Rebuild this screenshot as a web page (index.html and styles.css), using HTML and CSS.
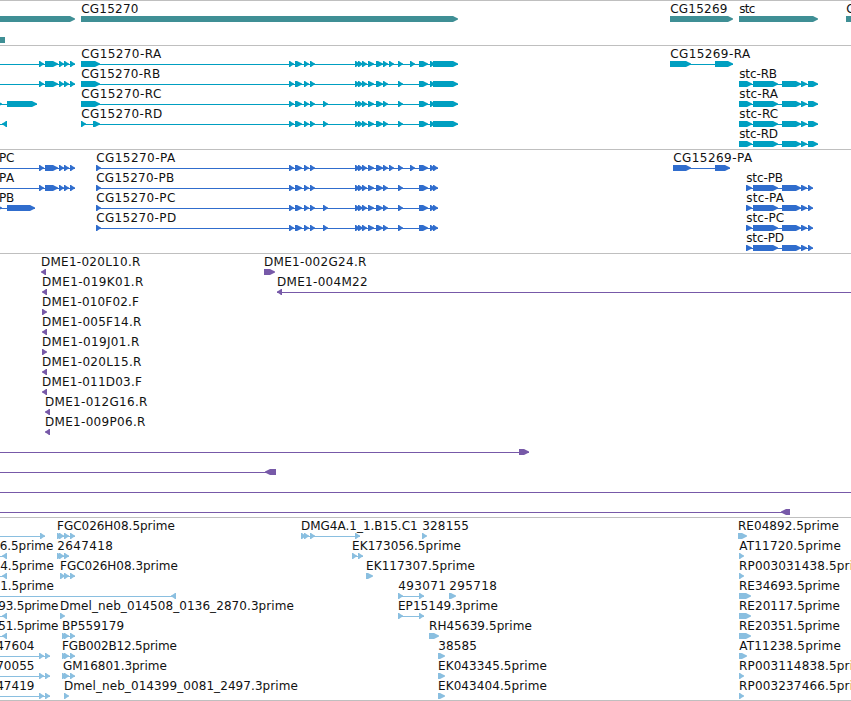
FILE: index.html
```html
<!DOCTYPE html>
<html lang="en">
<head>
<meta charset="utf-8">
<title>Genome tracks</title>
<link rel="stylesheet" href="styles.css">
</head>
<body>
<main class="browser" id="browser"></main>
<script src="tracks.js"></script>
</body>
</html>
```
FILE: styles.css
```css
body {
  margin: 0;
  background: #fff;
  overflow: hidden;
}

.browser {
  display: flex;
  flex-direction: column;
  width: 851px;
  height: 700px;
  border-bottom: 1px solid #bfbfbf;
}

.track {
  box-sizing: border-box;
  flex: none;
  border-top: 1px solid #bfbfbf;
}

.track svg {
  display: block;
  width: 851px;
  height: 100%;
}

.track text {
  font: 12px "DejaVu Sans", sans-serif;
  fill: #111;
}

.genes { height: 45px; color: #3f8f95; }
.transcripts { height: 104px; color: #009fc1; }
.proteins { height: 104px; color: #306dcd; }
.clones { height: 264px; color: #7759a8; }
.ests { height: 183px; color: #8abfe0; }
```
FILE: tracks.js
```js
const NS = 'http://www.w3.org/2000/svg';
const pen = document.createElement('canvas').getContext('2d');
pen.font = '12px "DejaVu Sans"';

// Feature: [row, label or '', label left, label right, exons, line start, line end]
// Exon: [start, end, direction]; direction -1 points left.
const head = [[39, 44], [45, 58], [59, 64], [64, 69], [70, 75]];
const early = [[289, 294], [295, 302], [304, 309], [310, 315]];
const extra = [[323, 328]];
const mid = [[355, 360], [358, 363], [362, 367], [368, 374], [376, 383], [383, 388]];
const late = [[398, 403]];
const isoA = [...early, ...mid, [389, 394], ...late, [410, 415], [419, 428]];
const isoB = [...early, ...mid, ...late, [419, 428]];
const isoC = [...early, ...extra, ...mid, ...late, [419, 428]];
const rEnd = [[430, 435], [433, 458]];
const pEnd = [[430, 435], [433, 438]];
const stcR = [[739, 752], [753, 778], [782, 801], [801, 807], [808, 818]];
const stcP = [[746, 752], [753, 778], [782, 801], [801, 807], [808, 813]];
const back = [[2, 7, -1]];
const three = [[62, 67], [64, 69], [70, 75]];
const ep = [[398, 403], [419, 424]];
const tail = [[39, 44], [45, 50]];

const tracks = {
  genes: [
    [0, '', 0, 0, [[-20, 75]]],
    [0, 'CG15270', 82, 138, [[81, 458]]],
    [0, 'CG15269', 671, 727, [[670, 733]]],
    [0, 'stc', 740, 755, [[739, 818]]],
    [0, 'C', 847, 854, [[846, 900]]],
    [1.05, '', 0, 0, [[-20, 5, 0]]]
  ],
  transcripts: [
    [0, '', 0, 0, head, 0, 75],
    [1, '', 0, 0, head, 0, 75],
    [2, '', 0, 0, [[-3, 2], [7, 37]], 0, 37],
    [3, '', 0, 0, back, 0, 7],
    [0, 'CG15270-RA', 82, 162, [[81, 100], ...isoA, ...rEnd], 81, 458],
    [1, 'CG15270-RB', 82, 160, [[81, 100], ...isoB, ...rEnd], 81, 458],
    [2, 'CG15270-RC', 82, 161, [[81, 100], ...isoC, ...rEnd], 81, 458],
    [3, 'CG15270-RD', 82, 162, [[81, 86], [93, 100], ...isoC, ...rEnd], 81, 458],
    [0, 'CG15269-RA', 671, 751, [[670, 691], [715, 733]], 670, 733],
    [1, 'stc-RB', 740, 777, stcR, 739, 818],
    [2, 'stc-RA', 740, 779, stcR, 739, 818],
    [3, 'stc-RC', 740, 778, stcR, 739, 818],
    [4, 'stc-RD', 740, 778, stcR, 739, 818]
  ],
  proteins: [
    [0, 'PC', 0, 14, head, 0, 75],
    [1, 'PA', 0, 15, head, 0, 75],
    [2, 'PB', 0, 14, [[-3, 2], [7, 35]], 0, 35],
    [0, 'CG15270-PA', 97, 176, [[96, 101], ...isoA, ...pEnd], 96, 438],
    [1, 'CG15270-PB', 97, 174, [[96, 101], ...isoB, ...pEnd], 96, 438],
    [2, 'CG15270-PC', 97, 175, [[96, 101], ...isoC, ...pEnd], 96, 438],
    [3, 'CG15270-PD', 97, 176, [[96, 101], ...isoC, ...pEnd], 96, 438],
    [0, 'CG15269-PA', 674, 753, [[673, 691], [715, 730]], 673, 730],
    [1, 'stc-PB', 747, 783, stcP, 746, 813],
    [2, 'stc-PA', 747, 785, stcP, 746, 813],
    [3, 'stc-PC', 747, 784, stcP, 746, 813],
    [4, 'stc-PD', 747, 784, stcP, 746, 813]
  ],
  clones: [
    [0, 'DME1-020L10.R', 42, 140, [[41, 46, -1]]],
    [1, 'DME1-019K01.R', 43, 143, [[42, 47, -1]]],
    [2, 'DME1-010F02.F', 43, 139, [[42, 47]]],
    [3, 'DME1-005F14.R', 43, 141, [[42, 47, -1]]],
    [4, 'DME1-019J01.R', 43, 139, [[42, 47]]],
    [5, 'DME1-020L15.R', 43, 141, [[42, 47, -1]]],
    [6, 'DME1-011D03.F', 43, 142, [[42, 47, -1]]],
    [7, 'DME1-012G16.R', 46, 147, [[45, 50, -1]]],
    [8, 'DME1-009P06.R', 46, 145, [[45, 50, -1]]],
    [0, 'DME1-002G24.R', 265, 366, [[264, 275]]],
    [1, 'DME1-004M22', 278, 367, [[277, 282, -1]], 277, 851],
    [9, '', 0, 0, [[519, 529]], 0, 529],
    [10, '', 0, 0, [[265, 276, -1]], 0, 276],
    [11, '', 0, 0, [], 0, 851],
    [12, '', 0, 0, [[781, 790, -1]], 0, 790]
  ],
  ests: [
    [0, '', 0, 0, [[40, 45]], 0, 45],
    [1, '6.5prime', 0.5, 53, back, 0, 7],
    [2, '4.5prime', 1, 53.5, back, 0, 7],
    [3, '1.5prime', 2, 53.5, [[171, 176, -1]], 0, 176],
    [4, '93.5prime', -1, 58, back, 0, 7],
    [5, '51.5prime', -1, 58, back, 0, 7],
    [6, '47604', -3, 34, tail, 0, 50],
    [7, '70055', -3, 34, tail, 0, 50],
    [8, '47419', -3, 34, tail, 0, 50],
    [0, 'FGC026H08.5prime', 58, 174.5, [[57, 62], [59, 64], [64, 69], [70, 75]], 57, 75],
    [1, '2647418', 58, 112.5, [[57, 62], [59, 64], [64, 69]], 57, 69],
    [2, 'FGC026H08.3prime', 61, 177.5, [[60, 65], [64, 69], [70, 75]], 60, 75],
    [4, 'Dmel_neb_014508_0136_2870.3prime', 61, 293.5, [[60, 65]]],
    [5, 'BP559179', 63, 123.5, three, 62, 75],
    [6, 'FGB002B12.5prime', 63, 176.5, three, 62, 75],
    [7, 'GM16801.3prime', 63, 166.5, three, 62, 75],
    [8, 'Dmel_neb_014399_0081_2497.3prime', 65, 297.5, [[64, 69]]],
    [0, 'DMG4A.1_1.B15.C1', 302, 417, [[301, 306], [304, 309], [310, 315], [355, 360]], 301, 360],
    [0, '328155', 423, 468.5, [[422, 427]]],
    [1, 'EK173056.5prime', 353, 460.5, [[352, 357], [358, 363]], 352, 363],
    [2, 'EK117307.5prime', 367, 474.5, [[366, 373]]],
    [3, '493071', 399, 445.5, ep, 398, 424],
    [3, '295718', 450, 496.5, [[449, 456]]],
    [4, 'EP15149.3prime', 399, 497.5, ep, 398, 424],
    [5, 'RH45639.5prime', 430, 531.5, [[429, 439]]],
    [6, '38585', 439, 476.5, [[438, 445]]],
    [7, 'EK043345.5prime', 439, 546.5, [[438, 445]]],
    [8, 'EK043404.5prime', 439, 546.5, [[438, 445]]],
    [0, 'RE04892.5prime', 739, 838.5, [[738, 747]]],
    [1, 'AT11720.5prime', 739.3, 840.5, [[739, 744]]],
    [2, 'RP003031438.5prime', 740, 872, [[739, 744]]],
    [3, 'RE34693.5prime', 740, 839.5, [[739, 751]]],
    [4, 'RE20117.5prime', 740, 839.5, [[739, 751]]],
    [5, 'RE20351.5prime', 740, 839.5, [[739, 751]]],
    [6, 'AT11238.5prime', 739.3, 840.5, [[739, 747]]],
    [7, 'RP003114838.5prime', 740, 872, [[739, 744]]],
    [8, 'RP003237466.5prime', 740, 872, [[739, 744]]]
  ]
};

function add(parent, name, attrs, text) {
  const el = document.createElementNS(NS, name);
  for (const key in attrs) el.setAttribute(key, attrs[key]);
  if (text) el.textContent = text;
  parent.appendChild(el);
}

function exonPath([a, b, dir = 1], y) {
  if (dir === 0) return `M${a} ${y}H${b}V${y + 6}H${a}Z`;
  const tip = dir > 0 ? b : a;
  const base = dir > 0 ? a : b;
  const neck = tip - dir * (b - a > 5 ? 5 : 4);
  const cheek = tip - dir * 2;
  const inset = 1.6;
  return `M${base} ${y}H${neck}L${cheek} ${y + inset}L${tip} ${y + 2.4}V${y + 3.6}` +
    `L${cheek} ${y + 6 - inset}L${neck} ${y + 6}H${base}Z`;
}

for (const name in tracks) {
  const section = document.createElement('section');
  section.className = `track ${name}`;
  const svg = document.createElementNS(NS, 'svg');
  for (const [row, label, left, right, exons, from, to] of tracks[name]) {
    // The svg begins one pixel below the track's top border.
    const y = Math.round(row * 20) + 15;
    if (to !== undefined) {
      add(svg, 'rect', { x: from, y: y + 3, width: to - from, height: 1, fill: 'currentColor' });
    }
    for (const exon of exons) add(svg, 'path', { d: exonPath(exon, y), fill: 'currentColor' });
    if (label) {
      const m = pen.measureText(label);
      const ink = m.actualBoundingBoxLeft + m.actualBoundingBoxRight;
      const gap = (right - left - ink) / Math.max(1, label.length - 1);
      const nudge = /^[Csc\d]/.test(label) ? 0.8 : 0;
      add(svg, 'text', {
        x: left + m.actualBoundingBoxLeft - nudge,
        y: y - 3,
        'letter-spacing': (gap + nudge / label.length).toFixed(3)
      }, label);
    }
  }
  section.appendChild(svg);
  document.getElementById('browser').appendChild(section);
}
```
